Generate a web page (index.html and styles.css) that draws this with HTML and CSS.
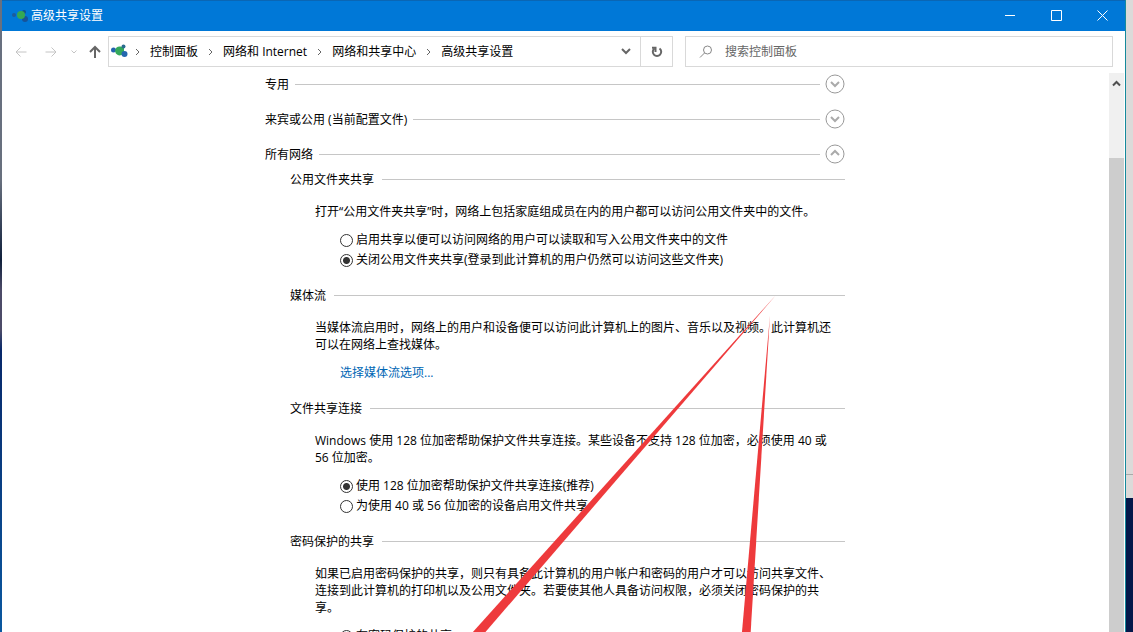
FILE: index.html
```
<!DOCTYPE html>
<html lang="zh-CN">

<head>
    <meta charset="UTF-8">
    <meta name="viewport" content="width=device-width, initial-scale=1.0">
    <title>高级共享设置</title>
    <link rel="stylesheet" href="styles.css">
</head>

<body>
    <div class="window">
        <header class="titlebar">
            <svg class="app-icon" width="18" height="14" viewBox="0 0 18 14">
                <circle cx="4" cy="6" r="2" fill="#1c5c9c" />
                <circle cx="14" cy="3" r="2" fill="#13548c" />
                <circle cx="15" cy="10" r="3" fill="#175398" />
                <circle cx="11" cy="6" r="4" fill="#35a853" />
            </svg>
            <h1>高级共享设置</h1>
            <button class="win-btn" aria-label="最小化">
                <svg width="11" height="11" viewBox="0 0 11 11"><path d="M0 5.5h10" /></svg>
            </button>
            <button class="win-btn" aria-label="最大化">
                <svg width="11" height="11" viewBox="0 0 11 11"><path d="M.5.5h10v10H.5z" /></svg>
            </button>
            <button class="win-btn" aria-label="关闭">
                <svg width="11" height="11" viewBox="0 0 11 11"><path d="M.5.5l10 10M10.5.5l-10 10" /></svg>
            </button>
        </header>

        <nav class="toolbar">
            <button class="nav-btn" aria-label="后退" disabled>
                <svg width="12" height="12" viewBox="0 0 12 12"><path d="M11.5 6H1M5.5 1.5L1 6l4.5 4.5" /></svg>
            </button>
            <button class="nav-btn" aria-label="前进" disabled>
                <svg width="12" height="12" viewBox="0 0 12 12"><path d="M.5 6H11M6.5 1.5L11 6l-4.5 4.5" /></svg>
            </button>
            <button class="nav-btn small" aria-label="最近浏览的位置" disabled>
                <svg width="6" height="6" viewBox="0 0 6 6"><path d="M.5 1.5L3 4l2.5-2.5" /></svg>
            </button>
            <button class="nav-btn up" aria-label="上移">
                <svg width="12" height="14" viewBox="0 0 12 14"><path d="M6 13V2M1 7l5-5 5 5" /></svg>
            </button>

            <div class="fields">
                <div class="address">
                    <svg class="place-icon" width="18" height="16" viewBox="0 0 18 16">
                        <circle cx="3.5" cy="6" r="2.5" fill="#2463ae" />
                        <path d="M12 3L10.500 2.500a4.500 4.500 0 1 0 1 8.500L14 9V4z" fill="#35a95b" />
                        <circle cx="13.5" cy="2.500" r="2" fill="#2b6c8f" />
                        <circle cx="14.5" cy="10" r="3" fill="#2467ae" />
                    </svg>
                    <svg class="sep" width="5" height="8" viewBox="0 0 5 8"><path d="M1 1l3 3-3 3" /></svg>
                    <a href="#">控制面板</a>
                    <svg class="sep" width="5" height="8" viewBox="0 0 5 8"><path d="M1 1l3 3-3 3" /></svg>
                    <a href="#">网络和 Internet</a>
                    <svg class="sep" width="5" height="8" viewBox="0 0 5 8"><path d="M1 1l3 3-3 3" /></svg>
                    <a href="#">网络和共享中心</a>
                    <svg class="sep" width="5" height="8" viewBox="0 0 5 8"><path d="M1 1l3 3-3 3" /></svg>
                    <a href="#">高级共享设置</a>
                    <button class="drop" aria-label="以前的位置">
                        <svg width="10" height="7" viewBox="0 0 10 7"><path d="M1 1l4 4 4-4" /></svg>
                    </button>
                    <button class="refresh" aria-label="刷新">
                        <svg width="12" height="12" viewBox="0 0 12 12">
                            <path d="M8.5 2.5A4.2 4.2 0 1 1 3.5 2.5" />
                            <path d="M4.5 6V1.8H1" />
                        </svg>
                    </button>
                </div>

                <div class="search">
                    <svg width="14" height="14" viewBox="0 0 14 14">
                        <circle cx="8.5" cy="5" r="4" />
                        <path d="M5.5 8L1 12.5" />
                    </svg>
                    <input type="text" aria-label="搜索" placeholder="搜索控制面板">
                </div>
            </div>
        </nav>

        <div class="view">
            <main class="page">
                <div class="content">
                    <section class="profile">
                        <h2>专用</h2>
                        <button class="toggle" aria-label="展开">
                            <svg width="20" height="20" viewBox="0 0 20 20"><circle cx="10" cy="10" r="9" /><path d="M6 8l4 4 4-4" /></svg>
                        </button>
                    </section>
                    <section class="profile">
                        <h2>来宾或公用 (当前配置文件)</h2>
                        <button class="toggle" aria-label="展开">
                            <svg width="20" height="20" viewBox="0 0 20 20"><circle cx="10" cy="10" r="9" /><path d="M6 8l4 4 4-4" /></svg>
                        </button>
                    </section>
                    <section class="profile">
                        <h2>所有网络</h2>
                        <button class="toggle" aria-label="折叠">
                            <svg width="20" height="20" viewBox="0 0 20 20"><circle cx="10" cy="10" r="9" /><path d="M6 11l4-4 4 4" /></svg>
                        </button>
                    </section>

                    <section class="group">
                        <h3>公用文件夹共享</h3>
                        <p>打开“公用文件夹共享”时，网络上包括家庭组成员在内的用户都可以访问公用文件夹中的文件。</p>
                        <div class="options">
                            <label><input type="radio" name="folder">启用共享以便可以访问网络的用户可以读取和写入公用文件夹中的文件</label>
                            <label><input type="radio" name="folder" checked>关闭公用文件夹共享(登录到此计算机的用户仍然可以访问这些文件夹)</label>
                        </div>
                    </section>

                    <section class="group">
                        <h3>媒体流</h3>
                        <p>当媒体流启用时，网络上的用户和设备便可以访问此计算机上的图片、音乐以及视频。此计算机还可以在网络上查找媒体。</p>
                        <div class="options">
                            <a href="#">选择媒体流选项...</a>
                        </div>
                    </section>

                    <section class="group">
                        <h3>文件共享连接</h3>
                        <p>Windows 使用 128 位加密帮助保护文件共享连接。某些设备不支持 128 位加密，必须使用 40 或 56 位加密。</p>
                        <div class="options">
                            <label><input type="radio" name="crypt" checked>使用 128 位加密帮助保护文件共享连接(推荐)</label>
                            <label><input type="radio" name="crypt">为使用 40 或 56 位加密的设备启用文件共享</label>
                        </div>
                    </section>

                    <section class="group">
                        <h3>密码保护的共享</h3>
                        <p>如果已启用密码保护的共享，则只有具备此计算机的用户帐户和密码的用户才可以访问共享文件、连接到此计算机的打印机以及公用文件夹。若要使其他人具备访问权限，必须关闭密码保护的共享。</p>
                        <div class="options">
                            <label><input type="radio" name="password">有密码保护的共享</label>
                        </div>
                    </section>

                    <!-- red pointer strokes over the settings -->
                    <svg class="marks" width="580" height="570" viewBox="0 0 580 570">
                        <path d="M511 222L198 570h13z" />
                        <path d="M505 242L476 570h9z" />
                    </svg>
                </div>
            </main>
            <div class="scrollbar">
                <button aria-label="向上滚动">
                    <svg width="9" height="7" viewBox="0 0 9 7"><path d="M1 5.5L4.5 2 8 5.5" /></svg>
                </button>
                <div class="thumb"></div>
            </div>
        </div>
    </div>
</body>

</html>
```
FILE: styles.css
```
* {
    box-sizing: border-box;
}

body {
    margin: 0;
    height: 100vh;
    padding: 0 7px 0 2px;
    overflow: hidden;
    font: 12px/17px "Open Sans", "Noto Sans CJK SC", sans-serif;
    color: #000;
    background:
        linear-gradient(#dcdad9 0 474px, #aaa 474px 475px, #dcdad9 475px 498px, #04184a 498px) right / 7px 100% no-repeat,
        linear-gradient(#687080 0, #68707e 180px, #10203c 260px, #4c4b68 290px, #4c4b68 330px, #08286a 350px, #0a58a0) left / 2px 100% no-repeat;
}

h1,
h2,
h3,
p {
    margin: 0;
    font-size: 12px;
    font-weight: normal;
}

button {
    display: flex;
    align-items: center;
    justify-content: center;
    padding: 0;
    border: none;
    background: none;
}

svg {
    display: block;
    flex: none;
    fill: none;
}

a {
    color: inherit;
    text-decoration: none;
}

.window {
    display: flex;
    flex-direction: column;
    height: 100%;
    background: #fff;
    border-right: 1px solid #158a9c;
}

.titlebar {
    display: flex;
    align-items: center;
    height: 31px;
    padding-left: 8px;
    color: #fff;
    background: #0078d7;
    box-shadow: inset 0 1px #0a66b4;
}

.titlebar h1 {
    flex: 1;
    margin-left: 3px;
}

.win-btn {
    width: 46px;
    height: 29px;
    stroke: #fff;
}

.toolbar {
    display: flex;
    align-items: center;
    height: 42px;
    padding: 0 12px 1px 4px;
}

.nav-btn {
    width: 30px;
    height: 30px;
    stroke: #c4c4c4;
}

.nav-btn.small {
    width: 16px;
}

.nav-btn.up {
    width: 26px;
    stroke: #666;
    stroke-width: 2px;
}

.fields {
    display: grid;
    flex: 1;
    grid-template-columns: 565fr 428fr;
    gap: 12px;
}

.address,
.search {
    display: flex;
    align-items: center;
    height: 31px;
    border: 1px solid #d9d9d9;
}

.address {
    padding-left: 1px;
    white-space: nowrap;
}

.address a {
    padding-bottom: 1px;
}

.sep {
    margin: 0 10px;
    stroke: #666;
}

.place-icon + .sep {
    margin-left: 7px;
}

.drop {
    width: 28px;
    height: 29px;
    margin-left: auto;
    stroke: #666;
    stroke-width: 2px;
}

.refresh {
    width: 32px;
    height: 29px;
    border-left: 1px solid #d9d9d9;
    stroke: #666;
    stroke-width: 2px;
}

.search {
    padding-left: 13px;
    stroke: #888;
}

.search input {
    flex: 1;
    min-width: 0;
    margin-left: 12px;
    padding: 0;
    border: none;
    outline: none;
    font: inherit;
    background: none;
}

.search input::placeholder {
    color: #666;
}

.view {
    display: flex;
    flex: 1;
    min-height: 0;
}

.page {
    flex: 1;
    padding-right: 1px;
    overflow: hidden;
}

.content {
    position: relative;
    max-width: 580px;
    margin: 0 auto;
}

.profile {
    display: flex;
    align-items: center;
    height: 22px;
    margin-bottom: 13px;
}

.profile h2 {
    display: flex;
    flex: 1;
    align-items: center;
}

.profile h2::after,
.group h3::after {
    content: "";
    flex: 1;
    height: 1px;
    margin-left: 6px;
    background: #c6c6c6;
}

.toggle {
    width: 20px;
    height: 20px;
    margin-left: 5px;
    stroke: #999;
}

.toggle path {
    stroke-width: 2px;
    stroke: #aaa;
}

.group {
    padding-left: 25px;
    margin-bottom: 18px;
}

.profile + .group {
    margin-top: -7px;
}

.group h3 {
    display: flex;
    align-items: center;
}

.group h3::after {
    margin-left: 8px;
}

.group p {
    margin: 15px 0 9px;
    padding: 0 5px 0 25px;
}

.options {
    padding-left: 50px;
}

.options label,
.options a {
    display: flex;
    align-items: center;
    height: 20px;
}

.options a {
    color: #0066b4;
}

.options input {
    appearance: none;
    width: 13px;
    height: 13px;
    margin: 3px 3px 0 0;
    border: 1px solid #333;
    border-radius: 50%;
}

.options input:checked {
    background: radial-gradient(circle, #333 0 3px, #fff 4px);
}

.marks {
    position: absolute;
    top: 0;
    left: 0;
    pointer-events: none;
}

.marks path {
    fill: #ee3a3c;
}

.scrollbar {
    display: flex;
    flex-direction: column;
    width: 15px;
    margin-right: 1px;
    background: #f0f0f0;
}

.scrollbar button {
    height: 20px;
    stroke: #505050;
    stroke-width: 2px;
}

.thumb {
    flex: 1;
    margin-top: 65px;
    background: #cdcdcd;
}
```
